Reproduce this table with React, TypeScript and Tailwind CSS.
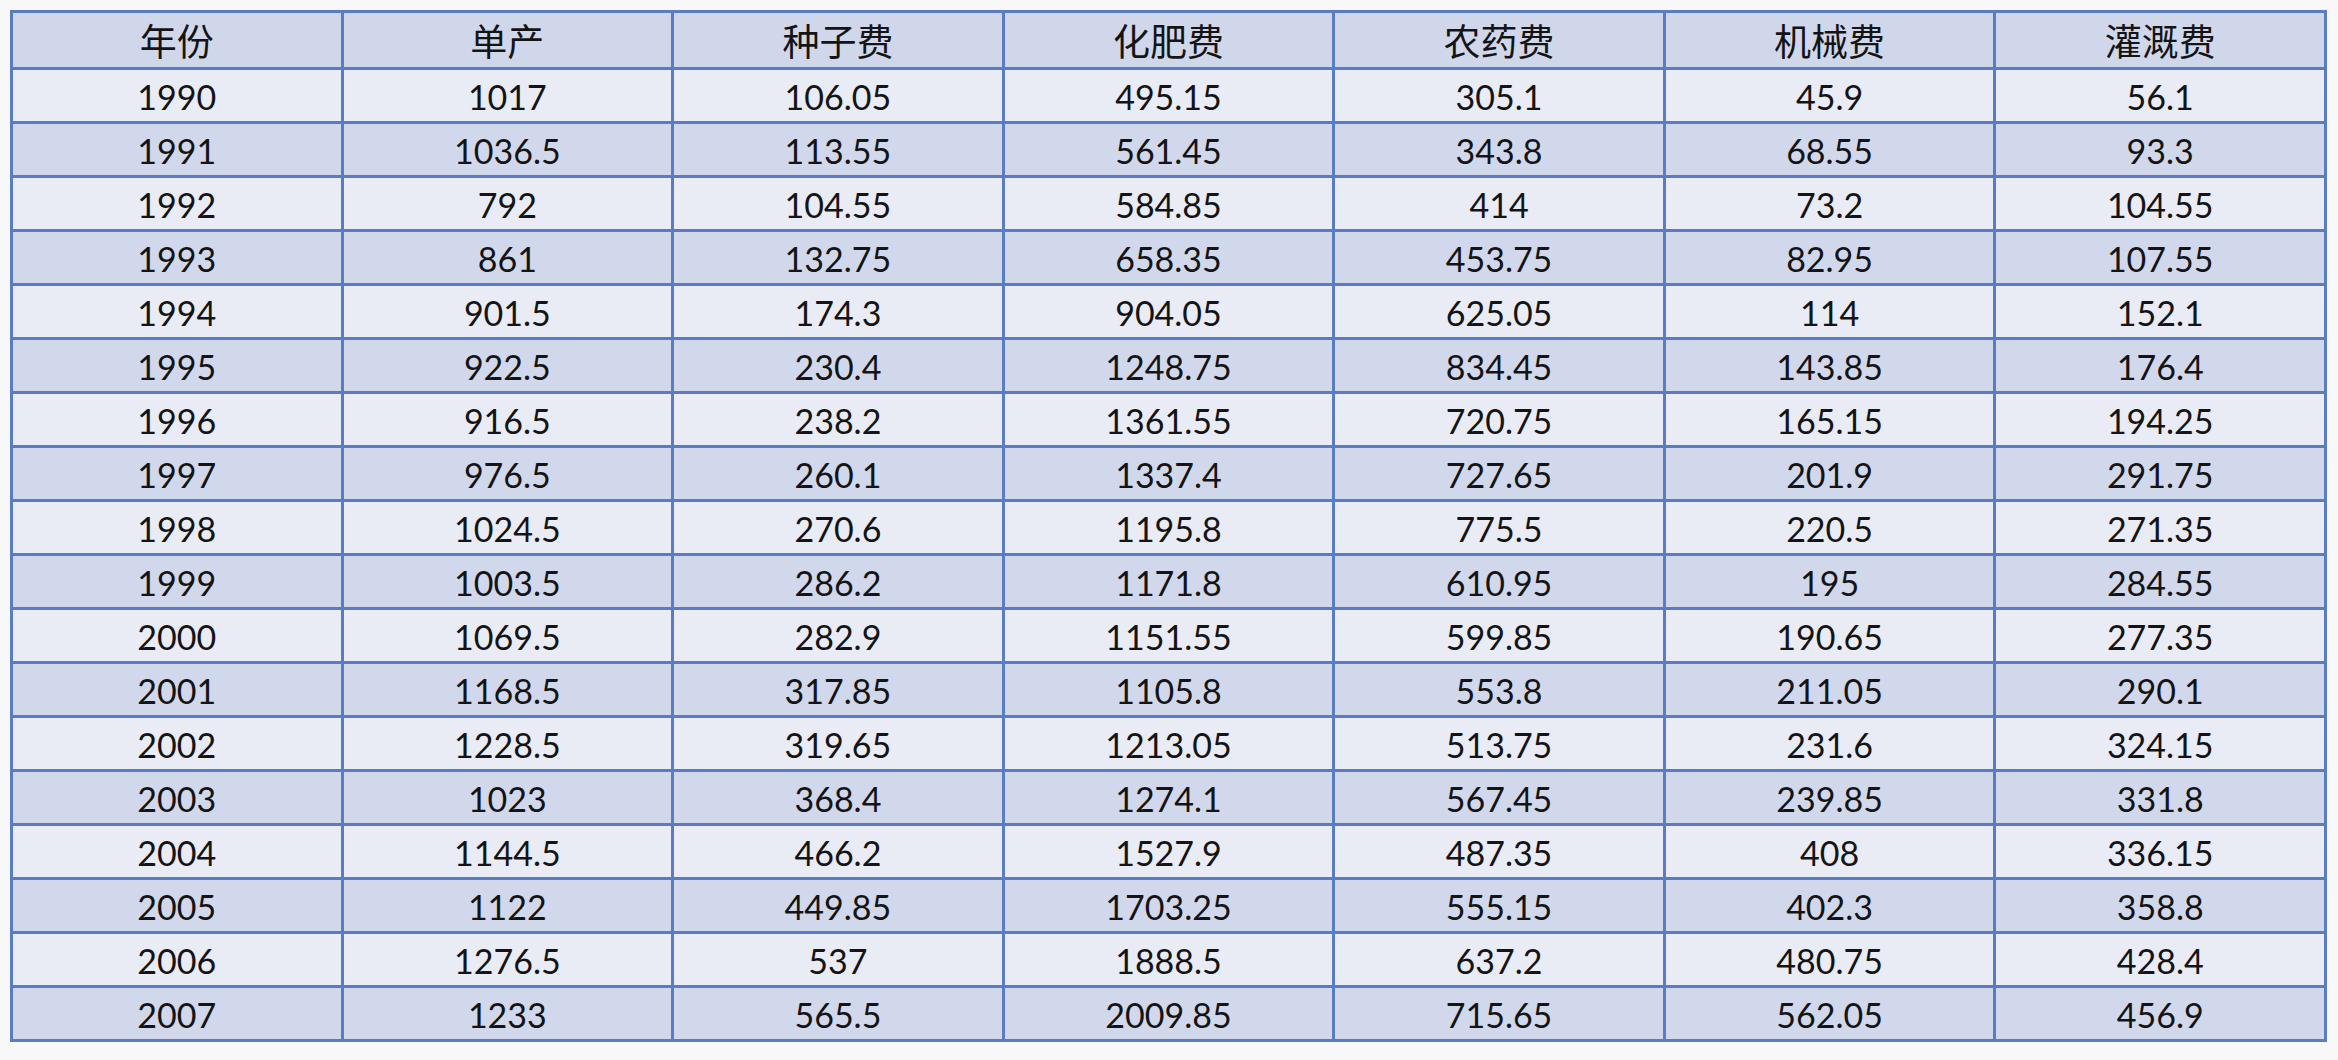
const HEAD = ["年份", "单产", "种子费", "化肥费", "农药费", "机械费", "灌溉费"];

const ROWS: string[][] = [
  ["1990", "1017", "106.05", "495.15", "305.1", "45.9", "56.1"],
  ["1991", "1036.5", "113.55", "561.45", "343.8", "68.55", "93.3"],
  ["1992", "792", "104.55", "584.85", "414", "73.2", "104.55"],
  ["1993", "861", "132.75", "658.35", "453.75", "82.95", "107.55"],
  ["1994", "901.5", "174.3", "904.05", "625.05", "114", "152.1"],
  ["1995", "922.5", "230.4", "1248.75", "834.45", "143.85", "176.4"],
  ["1996", "916.5", "238.2", "1361.55", "720.75", "165.15", "194.25"],
  ["1997", "976.5", "260.1", "1337.4", "727.65", "201.9", "291.75"],
  ["1998", "1024.5", "270.6", "1195.8", "775.5", "220.5", "271.35"],
  ["1999", "1003.5", "286.2", "1171.8", "610.95", "195", "284.55"],
  ["2000", "1069.5", "282.9", "1151.55", "599.85", "190.65", "277.35"],
  ["2001", "1168.5", "317.85", "1105.8", "553.8", "211.05", "290.1"],
  ["2002", "1228.5", "319.65", "1213.05", "513.75", "231.6", "324.15"],
  ["2003", "1023", "368.4", "1274.1", "567.45", "239.85", "331.8"],
  ["2004", "1144.5", "466.2", "1527.9", "487.35", "408", "336.15"],
  ["2005", "1122", "449.85", "1703.25", "555.15", "402.3", "358.8"],
  ["2006", "1276.5", "537", "1888.5", "637.2", "480.75", "428.4"],
  ["2007", "1233", "565.5", "2009.85", "715.65", "562.05", "456.9"],
];

export default function App() {
  return (
    <div className="min-h-screen w-full bg-[#f8f8f8] pl-[10px] pt-[10px]">
      <table className="w-[2317px] table-fixed border-collapse border-[3px] border-[#5a7cc3] text-center text-[#141414]">
        <thead>
          <tr className="h-[57px] bg-[#d1d7eb]">
            {HEAD.map((h) => (
              <th
                key={h}
                className="border-[3px] border-[#5a7cc3] p-0 text-[37px] font-normal leading-none [font-family:'Noto_Sans_CJK_SC','Noto_Sans',sans-serif]"
              >
                {h}
              </th>
            ))}
          </tr>
        </thead>
        <tbody>
          {ROWS.map((row, i) => (
            <tr
              key={row[0]}
              className={`h-[54px] ${i % 2 === 0 ? "bg-[#e9ebf5]" : "bg-[#d2d8ec]"}`}
            >
              {row.map((cell, j) => (
                <td
                  key={j}
                  className="border-[3px] border-[#5a7cc3] p-0 pt-[2px] text-[34px] leading-none [font-family:Lato,'Open_Sans',sans-serif]"
                >
                  {cell}
                </td>
              ))}
            </tr>
          ))}
        </tbody>
      </table>
    </div>
  );
}
